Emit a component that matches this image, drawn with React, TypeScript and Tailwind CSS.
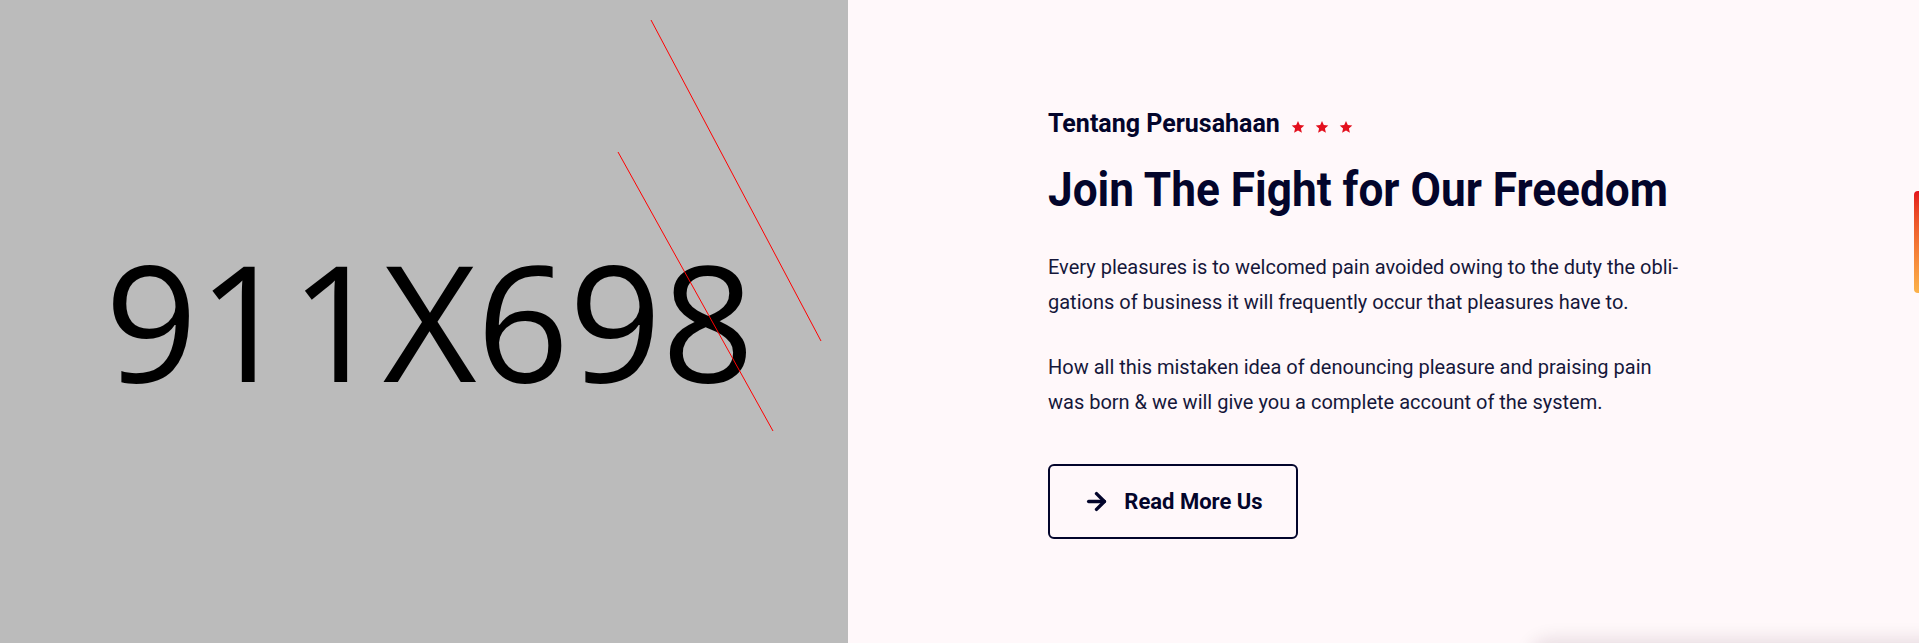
import { ArrowRight } from "lucide-react";

const Star = () => (
  <svg width="14" height="14" viewBox="0 0 24 24" className="fill-[#e3101d]">
    <path d="M12 1.5l3.1 7.1 7.7.7-5.8 5.1 1.7 7.6L12 18l-6.7 4 1.7-7.6-5.8-5.1 7.7-.7z" />
  </svg>
);

const App = () => {
  return (
    <section className="relative w-full h-[643px] overflow-hidden flex font-['Roboto',sans-serif]">
      {/* placeholder image */}
      <div className="relative w-[848px] shrink-0 bg-[#bbbbbb] overflow-hidden">
        <div className="pt-[238px] pl-[105px]">
          <span className="inline-block text-[162px] leading-none text-black font-['Open_Sans',sans-serif] whitespace-nowrap">
            911X698
          </span>
        </div>
        <svg className="absolute inset-0" width="848" height="643">
          <line x1="651" y1="20" x2="821" y2="341" stroke="#ff0000" strokeWidth="1" />
          <line x1="618" y1="152" x2="773" y2="431" stroke="#ff0000" strokeWidth="1" />
        </svg>
      </div>

      {/* about content */}
      <div className="flex-1 bg-[#fff8fa] pl-[200px] pt-[109px]">
        <div className="flex items-center gap-[11px] h-[29px]">
          <h3 className="text-[25px] leading-[29px] font-bold text-[#03052b]">Tentang Perusahaan</h3>
          <div className="flex gap-[10px] pt-[6px]">
            <Star />
            <Star />
            <Star />
          </div>
        </div>
        <h2 className="mt-[23px] h-[58px] text-[48px] leading-[58px] font-bold text-[#03052b] whitespace-nowrap">
          <span className="inline-block origin-left scale-x-[0.92]">Join The Fight for Our Freedom</span>
        </h2>
        <p className="mt-[31px] text-[20px] leading-[35px] text-[#15173a] whitespace-nowrap">
          Every pleasures is to welcomed pain avoided owing to the duty the obli-
          <br />
          gations of business it will frequently occur that pleasures have to.
        </p>
        <p className="mt-[30px] text-[20px] leading-[35px] text-[#15173a] whitespace-nowrap">
          How all this mistaken idea of denouncing pleasure and praising pain
          <br />
          was born &amp; we will give you a complete account of the system.
        </p>
        <a
          href="#"
          className="mt-[44px] flex items-center justify-center gap-[14px] w-[250px] h-[75px] border-2 border-[#03052b] rounded-[6px] text-[22px] font-bold text-[#03052b] whitespace-nowrap"
        >
          <ArrowRight size={27} strokeWidth={3} />
          Read More Us
        </a>
      </div>

      {/* scroll progress */}
      <div className="absolute right-0 top-[191px] w-[5px] h-[102px] rounded-l-sm bg-gradient-to-b from-[#e3101d] to-[#fbb24a]" />
      {/* card below edge */}
      <div className="absolute left-[1530px] top-[643px] w-[420px] h-[40px] rounded-[20px] shadow-[0_-4px_18px_rgba(60,20,40,0.12)]" />
    </section>
  );
};

export default App;
